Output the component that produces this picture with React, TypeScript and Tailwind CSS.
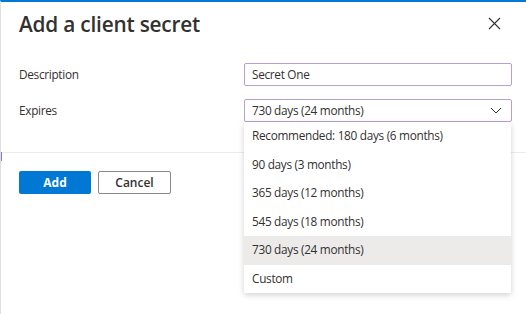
import React from "react";

const options = [
  "Recommended: 180 days (6 months)",
  "90 days (3 months)",
  "365 days (12 months)",
  "545 days (18 months)",
  "730 days (24 months)",
  "Custom",
];

export default function App() {
  const selected = "730 days (24 months)";

  return (
    <div
      className="relative h-[314px] w-[526px] overflow-hidden border-l border-t-2 border-l-[#e1dfdd] border-t-[#0078d4] bg-white text-[#323130]"
      style={{ fontFamily: '"Open Sans", "Noto Sans", sans-serif' }}
    >
      <span className="absolute left-[-1px] top-[150px] h-[9px] w-[2px] bg-[#7b79c9]" />

      <div className="flex items-start justify-between pl-[18px] pr-[25px] pt-[6px]">
        <h1 className="text-[20.8px] font-semibold leading-[32px] tracking-[-0.2px]">
          Add a client secret
        </h1>
        <button className="mt-[9px] p-0">
          <svg width="13" height="13" viewBox="0 0 13 13" fill="none">
            <path d="M1 1L12 12M12 1L1 12" stroke="#323130" strokeWidth="1.1" />
          </svg>
        </button>
      </div>

      <div className="mt-[23px] flex flex-col gap-[13px] pl-[18px] text-[11.8px] tracking-[-0.3px]">
        <div className="flex items-center">
          <label className="w-[225px]">Description</label>
          <div className="flex h-[23px] w-[268px] items-center rounded-[2px] border border-[#b99fd1] px-[7px]">
            Secret One
          </div>
        </div>
        <div className="flex items-center">
          <label className="w-[225px]">Expires</label>
          <div className="relative w-[268px]">
            <div className="flex h-[23px] items-center justify-between rounded-[2px] border border-[#b99fd1] pl-[7px] pr-[9px]">
              <span>{selected}</span>
              <svg width="12" height="7" viewBox="0 0 12 7" fill="none">
                <path d="M1 1L6 6L11 1" stroke="#323130" strokeWidth="1" />
              </svg>
            </div>
            <ul className="absolute left-0 top-full z-10 w-[267px] bg-white shadow-[0_2px_6px_rgba(0,0,0,0.18)]">
              {options.map((o) => (
                <li
                  key={o}
                  className={`flex h-[28.5px] items-center px-[8px] ${
                    o === selected ? "bg-[#edebe9]" : ""
                  }`}
                >
                  {o}
                </li>
              ))}
            </ul>
          </div>
        </div>
      </div>

      <div className="mt-[30px] border-b border-[#edebe9]" />

      <div className="flex gap-[7px] pl-[18px] pt-[18px] text-[12px]">
        <button className="h-[23px] w-[72px] rounded-[2px] bg-[#0078d4] font-bold text-white">
          Add
        </button>
        <button className="h-[23px] w-[73px] rounded-[2px] border border-[#8a8886] bg-white font-semibold">
          Cancel
        </button>
      </div>
    </div>
  );
}
